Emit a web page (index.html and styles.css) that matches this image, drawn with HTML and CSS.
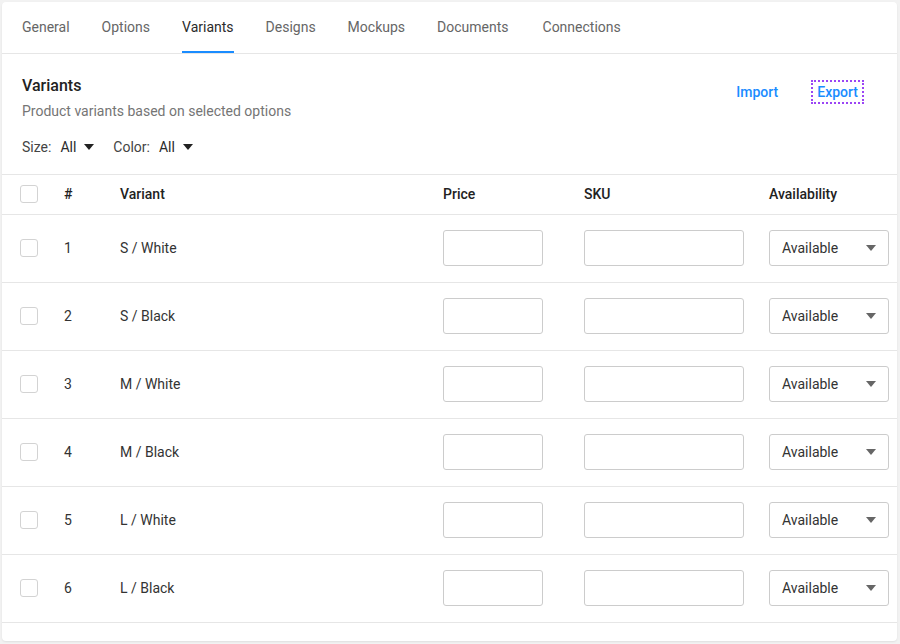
FILE: index.html
```html
<!DOCTYPE html>
<html lang="en">
<head>
  <meta charset="UTF-8" />
  <meta name="viewport" content="width=device-width, initial-scale=1.0"/>
  <title>Product - Variants</title>
  <link rel="stylesheet" href="styles.css">
</head>
<body>

  <div class="card">
    <nav class="tabs">
      <a href="#" class="tab">General</a>
      <a href="#" class="tab">Options</a>
      <a href="#" class="tab active">Variants</a>
      <a href="#" class="tab">Designs</a>
      <a href="#" class="tab">Mockups</a>
      <a href="#" class="tab">Documents</a>
      <a href="#" class="tab">Connections</a>
    </nav>

    <div class="section-head">
      <div class="section-info">
        <h2>Variants</h2>
        <p class="subtitle">Product variants based on selected options</p>
        <div class="filters">
          <span class="filter-label">Size:</span>
          <span class="filter-value">All <span class="caret"></span></span>
          <span class="filter-label">Color:</span>
          <span class="filter-value">All <span class="caret"></span></span>
        </div>
      </div>
      <div class="section-actions">
        <button class="link-button">Import</button>
        <button class="link-button focused">Export</button>
      </div>
    </div>

    <div class="variants-table">
      <div class="table-row table-header">
        <div><span class="checkbox"></span></div>
        <div>#</div>
        <div>Variant</div>
        <div>Price</div>
        <div>SKU</div>
        <div>Availability</div>
      </div>

      <div class="table-row">
        <div><span class="checkbox"></span></div>
        <div>1</div>
        <div>S / White</div>
        <div><input type="text" class="price-input" /></div>
        <div><input type="text" class="sku-input" /></div>
        <div><div class="select">Available <span class="select-caret"></span></div></div>
      </div>

      <div class="table-row">
        <div><span class="checkbox"></span></div>
        <div>2</div>
        <div>S / Black</div>
        <div><input type="text" class="price-input" /></div>
        <div><input type="text" class="sku-input" /></div>
        <div><div class="select">Available <span class="select-caret"></span></div></div>
      </div>

      <div class="table-row">
        <div><span class="checkbox"></span></div>
        <div>3</div>
        <div>M / White</div>
        <div><input type="text" class="price-input" /></div>
        <div><input type="text" class="sku-input" /></div>
        <div><div class="select">Available <span class="select-caret"></span></div></div>
      </div>

      <div class="table-row">
        <div><span class="checkbox"></span></div>
        <div>4</div>
        <div>M / Black</div>
        <div><input type="text" class="price-input" /></div>
        <div><input type="text" class="sku-input" /></div>
        <div><div class="select">Available <span class="select-caret"></span></div></div>
      </div>

      <div class="table-row">
        <div><span class="checkbox"></span></div>
        <div>5</div>
        <div>L / White</div>
        <div><input type="text" class="price-input" /></div>
        <div><input type="text" class="sku-input" /></div>
        <div><div class="select">Available <span class="select-caret"></span></div></div>
      </div>

      <div class="table-row">
        <div><span class="checkbox"></span></div>
        <div>6</div>
        <div>L / Black</div>
        <div><input type="text" class="price-input" /></div>
        <div><input type="text" class="sku-input" /></div>
        <div><div class="select">Available <span class="select-caret"></span></div></div>
      </div>
    </div>
  </div>

</body>
</html>
```

FILE: styles.css
```css
:root {
  --blue: #1a8cff;
  --text: #2b2b2b;
  --muted: #757575;
  --line: #e6e6e6;
  --input-border: #cccccc;
  --page-bg: #f2f2f2;
}

* {
  box-sizing: border-box;
  margin: 0;
  padding: 0;
}

body {
  font-family: Roboto, "Liberation Sans", Arial, sans-serif;
  font-size: 14px;
  line-height: 20px;
  color: var(--text);
  background-color: var(--page-bg);
  padding: 2px;
}

.card {
  width: 895px;
  background: #fff;
  border-radius: 4px;
  box-shadow: 0 1px 2px rgba(0, 0, 0, 0.08);
  padding-bottom: 18px;
}

/* tabs */
.tabs {
  display: flex;
  gap: 32px;
  padding-left: 20px;
  border-bottom: 1px solid var(--line);
}

.tab {
  height: 51px;
  display: flex;
  align-items: center;
  color: #666;
  text-decoration: none;
  border-bottom: 2px solid transparent;
}

.tab:last-child {
  margin-left: 2px;
}

.tab.active {
  color: var(--text);
  border-bottom-color: var(--blue);
}

/* section header */
.section-head {
  display: flex;
  justify-content: space-between;
  padding: 22px 33px 17px 20px;
}

.section-head h2 {
  font-size: 16px;
  font-weight: 500;
  line-height: 20px;
  color: #222;
}

.subtitle {
  margin-top: 5px;
  color: var(--muted);
}

.filters {
  display: flex;
  align-items: center;
  margin-top: 16px;
}

.filter-label {
  color: #444;
  margin-right: 9px;
}

.filter-value {
  display: flex;
  align-items: center;
  gap: 8px;
  margin-right: 19px;
}

.caret {
  width: 0;
  height: 0;
  border-left: 5px solid transparent;
  border-right: 5px solid transparent;
  border-top: 6px solid #222;
}

.section-actions {
  display: flex;
  gap: 27px;
  padding-top: 4px;
}

.link-button {
  font-family: inherit;
  font-size: 14px;
  font-weight: 500;
  line-height: 20px;
  height: 24px;
  padding: 0 4px;
  background: none;
  border: 2px solid transparent;
  color: var(--blue);
  cursor: pointer;
}

.link-button.focused {
  border: 2px dotted #9b45f5;
}

/* table */
.variants-table {
  border-top: 1px solid var(--line);
}

.table-row {
  display: grid;
  grid-template-columns: 44px 56px 323px 141px 185px 120px;
  align-items: center;
  padding-left: 18px;
  padding-bottom: 1px;
  height: 68px;
  border-bottom: 1px solid var(--line);
  color: #333;
}

.table-header {
  height: 40px;
  font-weight: 500;
  color: #222;
}

.checkbox {
  display: block;
  width: 18px;
  height: 18px;
  border: 1px solid #d3d3d3;
  border-radius: 3px;
  background: #fff;
}

.price-input,
.sku-input {
  display: block;
  height: 36px;
  border: 1px solid var(--input-border);
  border-radius: 3px;
  font-family: inherit;
  font-size: 14px;
  padding: 0 10px;
}

.price-input {
  width: 100px;
}

.sku-input {
  width: 160px;
}

.select {
  width: 120px;
  height: 36px;
  border: 1px solid var(--input-border);
  border-radius: 3px;
  display: flex;
  align-items: center;
  justify-content: space-between;
  padding: 0 12px 0 12px;
  color: #333;
}

.select-caret {
  width: 0;
  height: 0;
  border-left: 5px solid transparent;
  border-right: 5px solid transparent;
  border-top: 6px solid #666;
}
```
